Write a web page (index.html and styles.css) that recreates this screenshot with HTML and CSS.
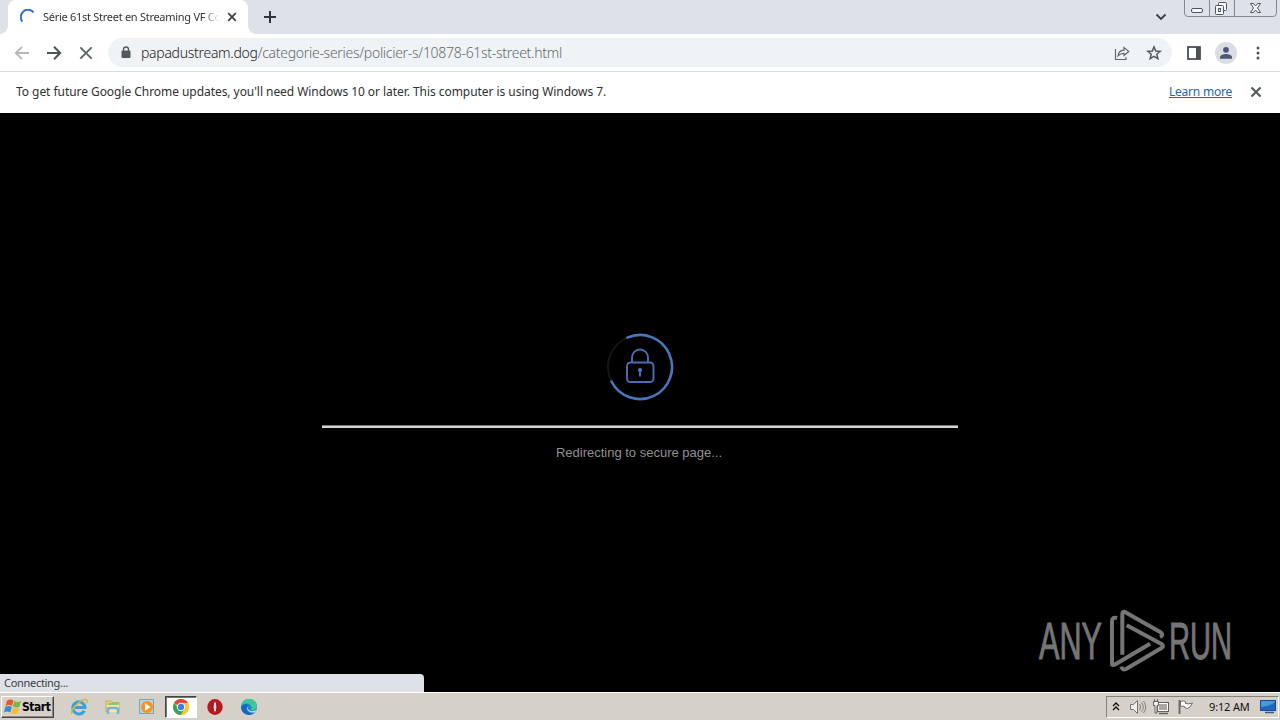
FILE: index.html
```html
<!DOCTYPE html>
<html lang="en">
<head>
<meta charset="utf-8">
<title>Série 61st Street en Streaming VF</title>
<link rel="stylesheet" href="styles.css">
</head>
<body>
<div class="screen">
  <header class="tabstrip">
    <div class="tab">
      <svg class="tab-spinner" width="16" height="16" viewBox="0 0 16 16"><path d="M2.400 12.600A7 7 0 0 1 13.600 3.400" fill="none" stroke="#2f70d6" stroke-width="2"/></svg>
      <span class="tab-title">Série 61st Street en Streaming VF Co</span>
      <svg class="tab-close" width="10" height="10" viewBox="0 0 10 10"><path d="M1.200 1.200l7.600 7.600M8.800 1.200L1.200 8.800" stroke="#3c4043" stroke-width="1.700"/></svg>
    </div>
    <svg class="new-tab" width="14" height="14" viewBox="0 0 14 14"><path d="M7 1v12M1 7h12" stroke="#303338" stroke-width="2"/></svg>
    <svg class="tab-search" width="12" height="8" viewBox="0 0 12 8"><path d="M1.500 1.500L6 6l4.500-4.500" fill="none" stroke="#3c4043" stroke-width="1.900"/></svg>
    <svg class="window-buttons" width="96" height="18" viewBox="0 0 96 18"><path d="M.5 0v13q0 3.500 3.500 3.500h85q3.500 0 3.500-3.500V0M25.500 0v16M50.500 0v16" fill="none" stroke="#85898f"/><g fill="#f5f6f8" stroke="#50545b"><rect x="7.500" y="8.500" width="11" height="4" rx="1.500"/><rect x="34.500" y="2.500" width="8" height="8" rx="1"/><rect x="31.500" y="5.500" width="8" height="9" rx="1"/><rect x="34.500" y="8.500" width="2" height="3"/><path d="M66.500 3.500h3l2 2.500 2-2.500h3l-3 4.500 3 4.500h-3l-2-2.500-2 2.500h-3l3-4.500z"/></g></svg>
  </header>

  <nav class="toolbar">
    <div class="nav-buttons">
      <svg width="16" height="16" viewBox="0 0 16 16"><path d="M15 8H2M8 1.800L1.800 8 8 14.200" fill="none" stroke="#b4b6b9" stroke-width="1.800"/></svg>
      <svg width="16" height="16" viewBox="0 0 16 16"><path d="M1 8h13M8 1.800L14.200 8 8 14.200" fill="none" stroke="#505357" stroke-width="2"/></svg>
      <svg width="16" height="16" viewBox="0 0 16 16"><path d="M2.300 2.300l11.400 11.400M13.700 2.300L2.300 13.700" stroke="#5f6368" stroke-width="1.900"/></svg>
    </div>
    <div class="omnibox">
      <svg class="secure" width="10" height="13" viewBox="0 0 10 13"><rect x=".5" y="4.500" width="9" height="7.500" rx="1" fill="#55595e"/><path d="M2.500 5V3.500a2.500 2.500 0 0 1 5 0V5" fill="none" stroke="#55595e" stroke-width="1.300"/></svg>
      <span class="url"><span class="host">papadustream.dog</span>/categorie-series/policier-s/10878-61st-street.html</span>
      <svg class="share" width="16" height="16" viewBox="0 0 16 16"><path d="M1.500 4v10.500h10.500V12M4 11c.3-3.800 2.400-5.700 6-5.900V2.400L14.800 6.500 10 10.500V8.200c-2.600 0-4.300.8-6 2.800z" fill="none" stroke="#5f6368" stroke-width="1.150"/></svg>
      <svg class="star" width="16" height="16" viewBox="0 0 16 16"><path d="M8 1.900l1.750 4.100 4.450.4-3.400 2.900 1.050 4.350L8 11.350l-3.850 2.300L5.200 9.300 1.800 6.400l4.450-.4z" fill="none" stroke="#55595e" stroke-width="1.500"/></svg>
    </div>
    <svg class="side-panel" width="14" height="14" viewBox="0 0 14 14"><rect x="1" y="1" width="12" height="12" fill="#fff" stroke="#4c4f54" stroke-width="1.800"/><path d="M9 1h4v12H9z" fill="#4c4f54"/></svg>
    <svg class="avatar" width="22" height="22" viewBox="0 0 22 22"><circle cx="11" cy="11" r="11" fill="#dadde3"/><circle cx="11" cy="7.800" r="2.900" fill="#4b5673"/><path d="M5 16.800v-1.600c0-2 3.700-3.200 6-3.200s6 1.200 6 3.200v1.600z" fill="#4b5673"/></svg>
    <svg class="more" width="4" height="14" viewBox="0 0 4 14"><g fill="#505357"><circle cx="2" cy="2" r="1.500"/><circle cx="2" cy="7" r="1.500"/><circle cx="2" cy="12" r="1.500"/></g></svg>
  </nav>

  <div class="infobar">
    <span class="notice">To get future Google Chrome updates, you'll need Windows 10 or later. This computer is using Windows 7.</span>
    <a class="learn">Learn more</a>
    <svg class="dismiss" width="12" height="12" viewBox="0 0 12 12"><path d="M1.500 1.500l9 9M10.500 1.500l-9 9" stroke="#55585c" stroke-width="2"/></svg>
  </div>

  <main class="page">
    <svg class="lock" width="68" height="68" viewBox="0 0 68 68"><circle cx="34" cy="34" r="32" fill="none" stroke="#151515" stroke-width="2"/><path d="M21.400 4.600A32 32 0 1 1 5.500 48.500" fill="none" stroke="#4a76bd" stroke-width="2.600" stroke-linecap="round"/><g fill="none" stroke="#4a6fb5" stroke-width="1.900"><rect x="21" y="29.500" width="26.500" height="19.500" rx="3.500"/><path d="M26 29v-4.500a8 8 0 0 1 16 0V29"/></g><circle cx="34" cy="37" r="2.100" fill="#5279bd"/><path d="M34 38v5.500" stroke="#5279bd" stroke-width="1.800"/></svg>
    <div class="rule"></div>
    <p class="message">Redirecting to secure page...</p>
    <svg class="watermark" width="204" height="70" viewBox="0 0 204 70"><g class="brand"><text x="3" y="55" textLength="63" lengthAdjust="spacingAndGlyphs">ANY</text><text x="133" y="55" textLength="63" lengthAdjust="spacingAndGlyphs">RUN</text></g><g fill="none" stroke="#757575" stroke-width="4" stroke-linejoin="round"><path d="M81 14q-5-1.500-5 3.500v42q0 2.500 3 1L114 39.700"/><path d="M86.300 50.700V10.500q0-4 3.500-2L125 28.500q3 2.500-1 4.500"/><path d="M90.700 21.300L125.500 40q3 2 0 4L90 65q-4 1.500-4.500-2.500"/></g></svg>
    <div class="status">Connecting...</div>
  </main>

  <footer class="taskbar">
    <div class="start">
      <svg width="18" height="16" viewBox="0 0 18 16"><path d="M3 1.500q3.500-2 6.500 0L8 7q-3-2-6.500 0z" fill="#e65b2c"/><path d="M10.300 2q3 1.800 6.700 0l-1.500 5.500q-3 2-6.600 0z" fill="#73b944"/><path d="M1.300 8q3.500-2 6.500 0l-1.500 5.500q-3-2-6.300 0z" fill="#3989d2"/><path d="M8.700 8.500q3 2 6.600 0L13.800 14q-3 2-6.600 0z" fill="#f6bd2f"/></svg>
      <span>Start</span>
    </div>
    <div class="shortcuts">
      <svg width="18" height="18" viewBox="0 0 18 18"><path d="M14.300 12.800A6.100 6.100 0 1 1 15 9.500H5" fill="none" stroke="#35a2df" stroke-width="2.900"/><path d="M2 16C-1.500 12.500 13-.8 16.700 2c1 1 .2 2.500-.4 3.300" fill="none" stroke="#d8b348" stroke-width="1.500"/></svg>
      <svg width="18" height="18" viewBox="0 0 18 18"><path d="M2 3h5l1 1.500h7v9H2z" fill="#efd277" stroke="#c8a957"/><path d="M4 5h10v5H4z" fill="#8bc76f"/><path d="M3 7h12v7H3z" fill="#f8e8a0"/><path d="M4 16v-4q0-2 2-2h6q2 0 2 2v4" fill="none" stroke="#72b4dc" stroke-width="2.500"/></svg>
      <svg width="18" height="18" viewBox="0 0 18 18"><rect x="1.500" y="1.500" width="14" height="14" fill="#b5d3e7" stroke="#71a6c8"/><circle cx="9" cy="9" r="6" fill="#f5931e"/><path d="M7 5.300l5.500 3.700L7 12.700z" fill="#fff"/></svg>
      <div class="active-app">
        <svg width="18" height="18" viewBox="0 0 18 18"><circle cx="9" cy="9" r="8" fill="#f7c52c"/><path d="M9 9L2.100 5A8 8 0 0 1 15.900 5z" fill="#df4536"/><path d="M9 9H5.500L2.100 5A8 8 0 0 0 9 17l3.500-6z" fill="#37a156"/><path d="M9 5h6.900A8 8 0 0 1 9 17l3.500-6z" fill="#f7c52c"/><circle cx="9" cy="9" r="4.200" fill="#fff"/><circle cx="9" cy="9" r="3.200" fill="#3e7de4"/></svg>
      </div>
      <svg width="18" height="18" viewBox="0 0 18 18"><ellipse cx="9" cy="9" rx="7.700" ry="7.900" fill="#b9161e"/><ellipse cx="9" cy="9" rx="2" ry="5.400" fill="#e5d9d3" stroke="#791014"/></svg>
      <svg width="18" height="18" viewBox="0 0 18 18"><circle cx="9" cy="9" r="8" fill="#1686ce"/><path d="M1.200 8.500C1.500 4 4.900 1 9 1c5 0 8 3.700 8 7.300 0 3-2.400 4.500-4.700 4.200-2-.2-1.300-1.300-.8-2.200C12 7 8 4.500 4.800 5.700c-1.700.7-2.900 1.700-3.600 2.800z" fill="#3fc79a"/><path d="M1.100 9c1-2.500 4.500-3.700 7-2.200-2.900 2.700-1.500 7.400 2.500 8.100 1.800.3 3.300-.3 4.500-.9A8 8 0 0 1 1.100 9z" fill="#1767bd"/><path d="M8.300 8c-1.500 3 1 5.700 4.800 5.200 1.200-.1 2-.5 3-1.200 0 0-.3 1.300-1.200 2.200-6 1.400-9.600-3.200-6.600-6.200z" fill="#d3dce0"/></svg>
    </div>
    <div class="tray">
      <svg class="chevrons" width="8" height="10" viewBox="0 0 8 10"><path d="M1 4l3-3 3 3M1 8l3-3 3 3" fill="none" stroke="#111" stroke-width="1.400"/></svg>
      <svg class="sound" width="18" height="16" viewBox="0 0 18 16"><path d="M1.500 5.500h3l4-4v13l-4-4h-3z" fill="#eee" stroke="#77756f"/><path d="M10.500 5q2 3 0 6M12.500 3.500q3.500 4.500 0 9M14.500 2q4.500 6 0 12" fill="none" stroke="#85827b"/></svg>
      <svg class="network" width="17" height="16" viewBox="0 0 17 16"><rect x="4.500" y="3.500" width="11" height="9" fill="#aaa8a2" stroke="#64625d"/><path d="M5.500 4.500h9v7h-9z" fill="none" stroke="#fff"/><path d="M6 14.500h9" stroke="#66645e" stroke-width="1.500"/><path d="M.5 2.500h5v4h-1.500v7.500h-2V6.500H.5zM1.500 0v3M4.500 0v3" fill="#eee" stroke="#66645e"/></svg>
      <svg class="flag" width="17" height="16" viewBox="0 0 17 16"><path d="M2.500 1v14" stroke="#706d68" stroke-width="2"/><path d="M3.500 2.500q3-1 5 0v2q3 1 7-.5l-3 4.500q-2 2-5 0v-1q-2-1-4 0z" fill="#fff" stroke="#706d68"/></svg>
      <span class="clock">9:12 AM</span>
      <svg class="desktop" width="16" height="14" viewBox="0 0 16 14"><rect x=".5" y=".5" width="15" height="10" fill="#1e67bf" stroke="#174d90"/><path d="M1 1h14v1Q9 7 1 7z" fill="#4a96df"/><path d="M5 12.500h9" stroke="#345e91" stroke-width="1.500"/></svg>
    </div>
  </footer>
</div>
</body>
</html>
```
FILE: styles.css
```css
* { box-sizing: border-box; }
body { margin: 0; background: #000; font-family: "DejaVu Sans Condensed", "Noto Sans", sans-serif; }
svg { display: block; flex: none; }
.screen { width: 1280px; height: 720px; display: grid; grid-template-rows: 34px 38px 41px 579px 28px; overflow: hidden; white-space: nowrap; }
.tabstrip { display: flex; background: #dee1e8; }
.tab { position: relative; display: flex; width: 240px; height: 34px; margin-left: 8px; padding: 0 11px 0 12px; align-items: center; background: #fff; border-radius: 8px 8px 0 0; }
.tab::before, .tab::after { content: ""; position: absolute; bottom: 0; width: 8px; height: 8px; }
.tab::before { left: -8px; background: radial-gradient(circle at 0 0, transparent 7.5px, #fff 8px); }
.tab::after { right: -8px; background: radial-gradient(circle at 100% 0, transparent 7.5px, #fff 8px); }
.tab-title { width: 178px; margin: -2px 0 0 7px; overflow: hidden; font-family: "Noto Sans", sans-serif; font-size: 11px; letter-spacing: -.28px; color: #303338; mask-image: linear-gradient(90deg, #000 160px, transparent 176px); }
.tab-close { margin-left: auto; }
.new-tab { margin: 10px 0 0 15px; }
.tab-search { margin: 13px 18px 0 auto; }
.window-buttons { margin-left: -1px; }
.toolbar { display: flex; align-items: center; background: #fff; border-bottom: 1px solid #d9dadc; }
.nav-buttons { display: flex; gap: 16px; margin-left: 14px; }
.omnibox { display: flex; align-items: center; width: 1064px; height: 29px; margin-left: 14px; padding: 0 10px 0 13px; border-radius: 15px; background: #f0f3f5; }
.url { margin-left: 10px; font-family: "Noto Sans", sans-serif; font-size: 14px; font-weight: 300; letter-spacing: -.29px; color: #65696e; }
.host { color: #202124; }
.share { margin-left: auto; }
.star { margin-left: 16px; }
.side-panel { margin-left: 15px; }
.avatar { margin-left: 14px; }
.more { margin-left: 19px; }
.infobar { display: flex; align-items: center; padding: 0 18px 0 16px; background: #fff; color: #303030; font-family: "Noto Sans", sans-serif; font-size: 12px; }
.notice { margin-top: -2px; letter-spacing: -.052px; }
.learn { margin: -2px 0 0 auto; letter-spacing: -.22px; color: #2464b4; text-decoration: underline; }
.dismiss { margin: -2px 0 0 18px; }
.page { position: relative; display: flex; flex-direction: column; align-items: center; padding-top: 220px; background: #000; }
.rule { width: 636px; height: 3px; margin-top: 24px; border-top: 1px solid #777; background: #d6d6d6; }
.message { margin: 16px 2px 0 0; font: 13px/17px "Liberation Sans", sans-serif; color: #929292; }
.watermark { position: absolute; left: 1036px; top: 491px; }
.brand { font: 52px "Liberation Sans", sans-serif; fill: #757575; stroke: #757575; stroke-width: 1px; }
.status { position: absolute; left: 0; bottom: 0; width: 424px; height: 18px; padding-left: 4px; border-radius: 0 4px 0 0; background: #dee1e8; color: #3c4043; font: 11px/18px "Noto Sans", sans-serif; letter-spacing: -.3px; }
.taskbar { display: flex; align-items: center; border-top: 1px solid #fff; background: #d5d0c8; }
.start { display: flex; align-items: center; width: 53px; height: 22px; margin-left: 1px; padding-left: 2px; border: 1px solid; border-color: #fff #444 #444 #fff; box-shadow: inset -1px -1px #8d8981; font-weight: bold; font-size: 12px; letter-spacing: -.45px; color: #000; }
.shortcuts { display: flex; align-items: center; gap: 16px; margin-left: 16px; }
.active-app { display: flex; align-items: center; justify-content: center; width: 32px; height: 22px; margin: 0 -7px; border: 1px solid; border-color: #444 #fff #fff #444; background: #fff; box-shadow: inset 1px 1px #777; }
.tray { display: flex; align-items: center; width: 173px; height: 22px; margin-left: auto; margin-right: 1px; padding: 0 2px 0 5px; border: 1px solid; border-color: #85817a #fff #fff #85817a; font: 11px "Noto Sans", sans-serif; color: #111; }
.sound { margin-left: 9px; }
.network { margin-left: 6px; }
.flag { margin-left: 7px; }
.clock { margin-left: 15px; letter-spacing: -.15px; }
.desktop { margin-left: auto; }
```
